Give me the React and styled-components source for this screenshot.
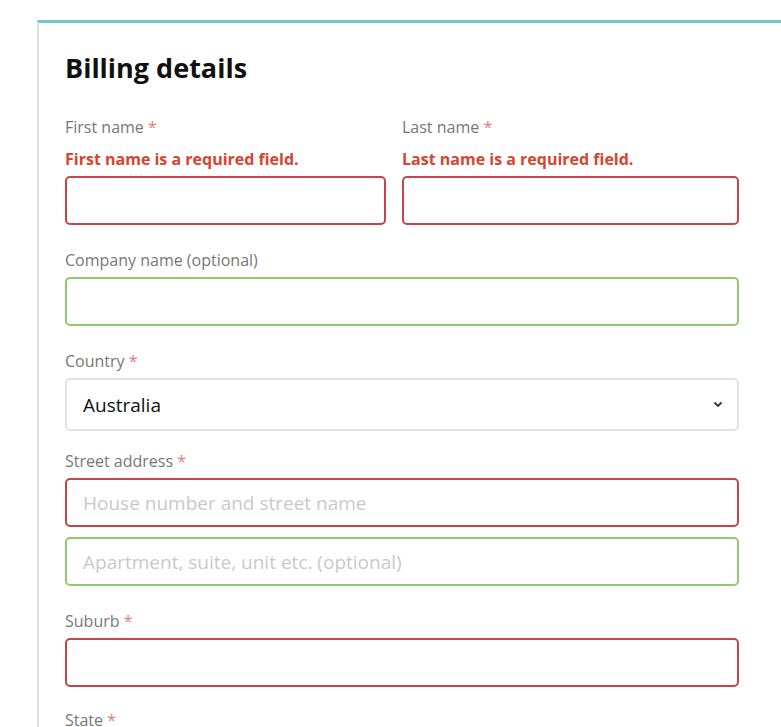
import React from 'react';
import styled, { createGlobalStyle } from 'styled-components';

const GlobalStyle = createGlobalStyle`
html, body {
margin: 0;
padding: 0;
background: #fff;
font-family: 'Open Sans', 'Noto Sans', sans-serif;
}
* {
box-sizing: border-box;
}
`;

const Billing = () => {
    return (
        <Page>
            <GlobalStyle />
            <Panel>
                <Title>Billing details</Title>
                <Row>
                    <Field>
                        <Label>First name <Req>*</Req></Label>
                        <ErrorText>First name is a required field.</ErrorText>
                        <Input $state="error" />
                    </Field>
                    <Field>
                        <Label>Last name <Req>*</Req></Label>
                        <ErrorText>Last name is a required field.</ErrorText>
                        <Input $state="error" />
                    </Field>
                </Row>
                <Field $space={24}>
                    <Label>Company name (optional)</Label>
                    <Input $state="ok" />
                </Field>
                <Field $space={24}>
                    <Label>Country <Req>*</Req></Label>
                    <SelectBox>
                        <SelectText>Australia</SelectText>
                        <svg width="10" height="7" viewBox="0 0 10 7">
                            <path d="M1.5 1.5 L5 5 L8.5 1.5" fill="none" stroke="#333" strokeWidth="1.8" />
                        </svg>
                    </SelectBox>
                </Field>
                <Field $space={19}>
                    <Label>Street address <Req>*</Req></Label>
                    <Input $state="error" placeholder="House number and street name" />
                    <Input $state="ok" $top={10} placeholder="Apartment, suite, unit etc. (optional)" />
                </Field>
                <Field $space={24}>
                    <Label>Suburb <Req>*</Req></Label>
                    <Input $state="error" />
                </Field>
                <Field $space={22}>
                    <Label>State <Req>*</Req></Label>
                </Field>
            </Panel>
        </Page>
    );
}

const Page = styled.div`
padding-top: 20px;
padding-left: 37px;
height: 727px;
overflow: hidden;
`;

const Panel = styled.div`
border-top: 3px solid #6fc6c4;
border-left: 2px solid #dedede;
padding: 28px 0 40px 26px;
min-height: 800px;
`;

const Title = styled.h2`
margin: 0;
font-size: 27px;
line-height: 34px;
font-weight: 700;
color: #111;
`;

const Row = styled.div`
display: grid;
grid-template-columns: 321px 337px;
column-gap: 16px;
margin-top: 31px;
width: 674px;
`;

const Field = styled.div`
display: flex;
flex-direction: column;
width: 674px;
margin-top: ${props => props.$space || 0}px;
${Row} & {
width: auto;
}
`;

const Label = styled.label`
font-size: 16px;
line-height: 22px;
color: #777;
margin-bottom: 6px;
`;

const Req = styled.span`
color: #e27b7b;
`;

const ErrorText = styled.div`
font-size: 16px;
line-height: 22px;
font-weight: 700;
color: #d6452f;
margin-top: 4px;
margin-bottom: 6px;
`;

const Input = styled.input`
height: 49px;
width: 100%;
margin-top: ${props => props.$top || 0}px;
border: 2px solid ${props => (props.$state === 'error' ? '#c8434a' : '#8fca6c')};
border-radius: 5px;
padding: 0 16px;
font-family: 'Open Sans', sans-serif;
font-size: 19px;
color: #222;
background: #fff;
outline: none;
&::placeholder {
color: #c9c9c9;
}
`;

const SelectBox = styled.div`
display: flex;
align-items: center;
justify-content: space-between;
height: 53px;
border: 2px solid #e2e2e2;
border-radius: 5px;
padding: 0 14px 0 16px;
`;

const SelectText = styled.span`
font-size: 19px;
color: #111;
`;

export default Billing;
